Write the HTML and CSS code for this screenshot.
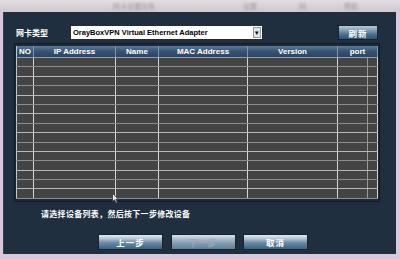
FILE: index.html
```html
<!DOCTYPE html>
<html>
  <head>
    <link rel="stylesheet" href="styles.css">
  </head>
  <body>
    <div class="window">
      <div class="titlebar">
        <span class="title-main">网卡设置向导</span>
        <span class="title-bit t1">设置</span>
        <span class="title-bit t2">网</span>
        <span class="title-bit t3">帮助</span>
      </div>
      <div class="dialog">
        <div class="toolbar">
          <span class="label">网卡类型</span>
          <div class="select">
            <span class="select-text">OrayBoxVPN Virtual Ethernet Adapter</span>
            <span class="select-arrow">▾</span>
          </div>
          <button class="btn refresh">刷新</button>
        </div>
        <div class="grid-frame">
          <table class="grid">
            <colgroup>
              <col class="c-no">
              <col class="c-ip">
              <col class="c-name">
              <col class="c-mac">
              <col class="c-ver">
              <col class="c-port">
              <col class="c-bar">
            </colgroup>
            <thead>
              <tr>
                <th>NO</th>
                <th>IP Address</th>
                <th>Name</th>
                <th>MAC Address</th>
                <th>Version</th>
                <th colspan="2">port</th>
              </tr>
            </thead>
            <tbody id="rows"></tbody>
          </table>
        </div>
        <p class="hint">请选择设备列表，然后按下一步修改设备</p>
        <div class="actions">
          <button class="btn">上一步</button>
          <button class="btn disabled">下一步</button>
          <button class="btn">取消</button>
        </div>
      </div>
      <svg class="cursor" width="8" height="11" viewBox="0 0 8 11">
        <path d="M0.5 0.5 L0.5 8.5 L2.5 6.8 L4 10 L5.3 9.4 L3.9 6.3 L6.6 6.3 Z" fill="#e8e8e8" stroke="#333" stroke-width="0.8"/>
      </svg>
    </div>
    <script>
      var tbody = document.getElementById("rows");
      for (var i = 0; i < 15; i++) {
        var tr = document.createElement("tr");
        if (i % 2 === 1) tr.className = "alt";
        for (var j = 0; j < 7; j++) {
          tr.appendChild(document.createElement("td"));
        }
        tbody.appendChild(tr);
      }
    </script>
  </body>
</html>
```

FILE: styles.css
```css
html,
body {
  margin: 0;
  padding: 0;
  background: #d9c6d8;
}

.window {
  position: relative;
  width: 400px;
  height: 259px;
  display: flex;
  flex-direction: column;
  background: #dac8da;
  font-family: "Liberation Sans", "Noto Sans CJK SC", sans-serif;
}

.titlebar {
  height: 12px;
  flex: none;
  display: flex;
  align-items: center;
  background: linear-gradient(#e2dde0, #cfc8cd);
  font-size: 7px;
  color: #a0949c;
}

.titlebar span {
  filter: blur(0.8px);
}

.title-main {
  margin-left: 113px;
}

.t1 {
  margin-left: 88px;
}

.t2 {
  margin-left: 42px;
}

.t3 {
  margin-left: 38px;
}

.dialog {
  flex: 1;
  margin: 0 4px 5px 3px;
  padding: 13px 0 0 10px;
  background: #1f2f40;
  border-left: 1px solid #33414f;
  box-sizing: border-box;
}

.toolbar {
  display: flex;
  align-items: center;
  height: 15px;
  width: 364px;
  padding-left: 2px;
  box-sizing: border-box;
}

.label {
  width: 54px;
  color: #fff;
  font-size: 8px;
  font-weight: bold;
  font-family: "Noto Sans CJK SC", sans-serif;
}

.select {
  width: 193px;
  height: 15px;
  display: flex;
  align-items: center;
  background: #fff;
  border: 1px solid #2a2a2a;
  box-sizing: border-box;
}

.select-text {
  flex: 1;
  padding-left: 2px;
  font-size: 7.5px;
  font-weight: bold;
  color: #000;
}

.select-arrow {
  width: 8px;
  height: 11px;
  margin-right: 1px;
  background: #e4e4e4;
  border: 1px solid #999;
  box-sizing: border-box;
  font-size: 7px;
  line-height: 9px;
  text-align: center;
  color: #000;
}

.btn {
  height: 16px;
  width: 65px;
  padding: 0;
  border: 1px solid #162432;
  background: linear-gradient(#e4ebf0 0%, #b6c8d5 25%, #6a8ba6 55%, #3a6284 100%);
  color: #fff;
  font-family: "Noto Sans CJK SC", sans-serif;
  font-size: 8.5px;
  font-weight: bold;
  letter-spacing: 1px;
}

.btn.disabled {
  color: #9aa9b5;
  background: linear-gradient(#dbe3e8 0%, #b2c1cc 25%, #86a0b3 55%, #60809a 100%);
}

.refresh {
  margin-left: auto;
  width: 40px;
  height: 15px;
  background: linear-gradient(#b8cbd8 0%, #7d9cb4 35%, #416a8c 70%, #2d5474 100%);
}

.grid-frame {
  width: 366px;
  margin-top: 3px;
  padding: 2px 1px;
  border: 1px solid #121c27;
  box-sizing: border-box;
  background: #1b2a39;
}

.grid {
  width: 362px;
  border-collapse: collapse;
  table-layout: fixed;
  border-left: 1px solid #c8c8c8;
  border-right: 1px solid #e0e0e0;
  border-bottom: 1px solid #f0f0f0;
}

.c-no { width: 17px; }
.c-ip { width: 82px; }
.c-name { width: 43px; }
.c-mac { width: 89px; }
.c-ver { width: 90px; }
.c-port { width: 30px; }
.c-bar { width: 10px; }

.grid th {
  height: 11px;
  padding: 0;
  overflow: hidden;
  white-space: nowrap;
  background: linear-gradient(#5c7a98, #3a5575 45%, #2c4462);
  border-right: 1px solid #7f95ac;
  border-bottom: 1px solid #8fa3b8;
  color: #fff;
  font-size: 8px;
  font-weight: bold;
  line-height: 10px;
}

.grid td {
  height: 8.4px;
  padding: 0;
  background: #444;
  border-right: 1px solid #d4d4d4;
  border-bottom: 1px solid #8e8e8e;
}

.grid tr.alt td {
  border-bottom-color: #b8b8b8;
}

.grid td:nth-child(6) {
  border-right-color: #9a9a9a;
}

.hint {
  margin: 7px 0 0 27px;
  height: 10px;
  color: #fff;
  font-family: "Noto Sans CJK SC", sans-serif;
  font-size: 8px;
  font-weight: bold;
  letter-spacing: 0.3px;
  line-height: 10px;
}

.actions {
  display: flex;
  gap: 7.5px;
  margin: 15px 0 0 84px;
}

.cursor {
  position: absolute;
  left: 112px;
  top: 193px;
}
```
